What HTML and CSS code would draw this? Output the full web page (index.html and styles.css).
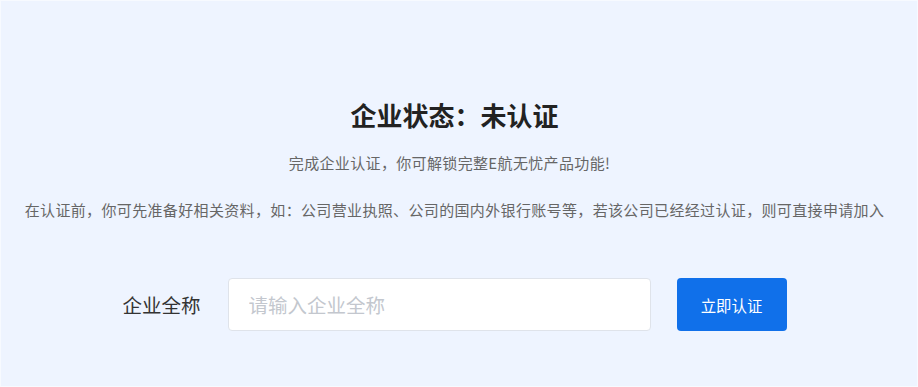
FILE: index.html
```html
<!DOCTYPE html>
<html lang="zh-CN">
<head>
<meta charset="utf-8">
<link rel="stylesheet" href="styles.css">
</head>
<body>
<div class="panel">
  <h1 class="title">企业状态：未认证</h1>
  <p class="sub">完成企业认证，你可解锁完整E航无忧产品功能!</p>
  <p class="tip">在认证前，你可先准备好相关资料，如：公司营业执照、公司的国内外银行账号等，若该公司已经经过认证，则可直接申请加入</p>
  <div class="form-row">
    <label class="label" for="name">企业全称</label>
    <input class="input" id="name" type="text" placeholder="请输入企业全称">
    <button class="btn" type="button">立即认证</button>
  </div>
</div>
</body>
</html>
```
FILE: styles.css
```css
* { box-sizing: border-box; }
html, body { margin: 0; padding: 0; background: #f7faff; }
body {
  font-family: "Noto Sans CJK SC", "Noto Sans", sans-serif;
  width: 918px;
  height: 387px;
  overflow: hidden;
  padding: 1px;
}
.panel {
  height: 385px;
  background: #eef4ff;
  display: flex;
  flex-direction: column;
  align-items: center;
  padding-top: 96px;
  padding-right: 9px;
}
.title {
  margin: 0;
  font-size: 26px;
  line-height: 36px;
  font-weight: 700;
  color: #222;
}
.sub {
  margin: 19px 0 0;
  font-size: 15px;
  letter-spacing: 0.35px;
  line-height: 22px;
  color: #666;
  padding-right: 10px;
}
.tip {
  margin: 25px 0 0;
  font-size: 15px;
  letter-spacing: 0.35px;
  line-height: 22px;
  color: #666;
}
.form-row {
  margin-top: 57px;
  display: flex;
  align-items: center;
}
.label {
  font-size: 19.5px;
  color: #333;
  margin-right: 27px;
}
.input {
  width: 423px;
  height: 53px;
  border: 1px solid #dfe3ea;
  border-radius: 4px;
  background: #fff;
  padding: 0 20px;
  font-family: inherit;
  font-size: 19.5px;
  color: #333;
  outline: none;
}
.input::placeholder { color: #c3c7ce; }
.btn {
  margin-left: 26px;
  width: 110px;
  height: 53px;
  border: none;
  border-radius: 4px;
  background: #1070ea;
  color: #fff;
  font-family: inherit;
  font-size: 15.4px;
  cursor: pointer;
}
```
